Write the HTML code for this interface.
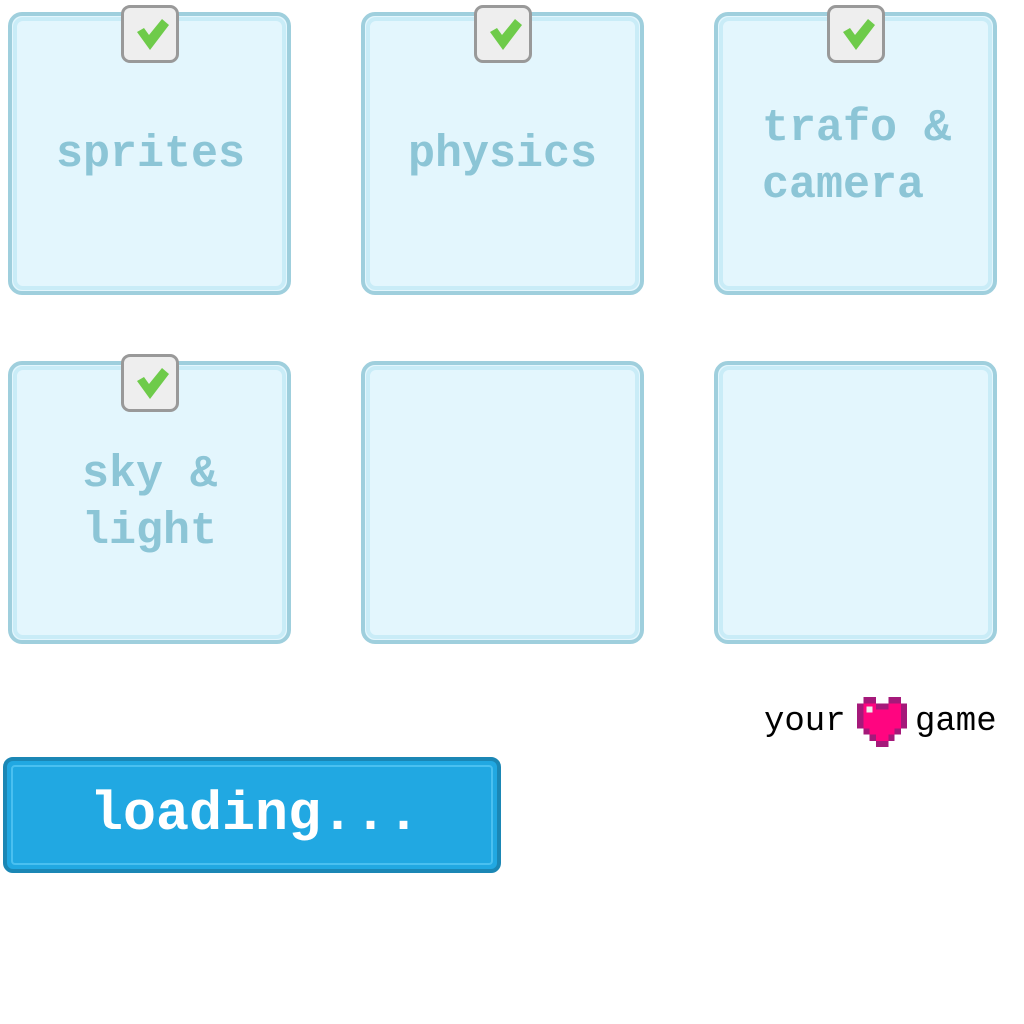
<!DOCTYPE html>
<html><head><style>
body{margin:0;width:1024px;height:1024px;background:#fff;position:relative;overflow:hidden;font-family:"Liberation Mono",monospace}
.card{position:absolute;width:275px;height:275px;border:4px solid #9fcfdd;border-radius:14px;background:#e3f6fd;box-sizing:content-box}
.card:before{content:"";position:absolute;left:1px;top:1px;right:1px;bottom:1px;border:4px solid #c9ecf7;border-radius:10px}
.t{position:absolute;color:#8cc5d6;font-weight:bold;font-size:45px;line-height:57px;white-space:pre}
.cb{position:absolute;width:52px;height:52px;border:3px solid #999;border-radius:9px;background:#eee}
.cb svg{position:absolute;left:9px;top:8px}
</style></head><body>
<div class="card" style="left:8px;top:12px"></div>
<div class="card" style="left:361px;top:12px"></div>
<div class="card" style="left:714px;top:12px"></div>
<div class="card" style="left:8px;top:361px"></div>
<div class="card" style="left:361px;top:361px"></div>
<div class="card" style="left:714px;top:361px"></div>
<div class="t" style="left:56px;top:126px">sprites</div>
<div class="t" style="left:408px;top:126px">physics</div>
<div class="t" style="left:762px;top:100px">trafo &amp;
camera</div>
<div class="t" style="left:82px;top:446px">sky &amp;
light</div>
<div class="cb" style="left:121px;top:5px"><svg width="36" height="36" viewBox="0 0 36 36"><path d="M4 16 L11 12 L16 19 L29 3 L36 9 L17 34 Z" fill="#6ecb4a"/></svg></div>
<div class="cb" style="left:474px;top:5px"><svg width="36" height="36" viewBox="0 0 36 36"><path d="M4 16 L11 12 L16 19 L29 3 L36 9 L17 34 Z" fill="#6ecb4a"/></svg></div>
<div class="cb" style="left:827px;top:5px"><svg width="36" height="36" viewBox="0 0 36 36"><path d="M4 16 L11 12 L16 19 L29 3 L36 9 L17 34 Z" fill="#6ecb4a"/></svg></div>
<div class="cb" style="left:121px;top:354px"><svg width="36" height="36" viewBox="0 0 36 36"><path d="M4 16 L11 12 L16 19 L29 3 L36 9 L17 34 Z" fill="#6ecb4a"/></svg></div>

<div style="position:absolute;left:764px;top:702px;font-size:34px;line-height:40px;color:#000">your</div>
<div style="position:absolute;left:915px;top:702px;font-size:34px;line-height:40px;color:#000">game</div>
<svg style="position:absolute;left:857px;top:697px" width="50" height="50" viewBox="0 0 8 8" shape-rendering="crispEdges">
<g fill="#a5197a">
<rect x="1" y="0" width="2" height="1"/><rect x="5" y="0" width="2" height="1"/>
<rect x="0" y="1" width="1" height="4"/><rect x="7" y="1" width="1" height="4"/>
<rect x="3" y="1" width="2" height="1"/>
<rect x="1" y="5" width="1" height="1"/><rect x="6" y="5" width="1" height="1"/>
<rect x="2" y="6" width="1" height="1"/><rect x="5" y="6" width="1" height="1"/>
<rect x="3" y="7" width="2" height="1"/>
</g>
<g fill="#ff0580">
<rect x="1" y="1" width="2" height="4"/><rect x="5" y="1" width="2" height="4"/>
<rect x="3" y="2" width="2" height="3"/>
<rect x="2" y="5" width="4" height="1"/><rect x="3" y="6" width="2" height="1"/>
</g>
<rect x="1.5" y="1.5" width="1" height="1" fill="#eee"/>
</svg>

<div style="position:absolute;left:3px;top:757px;width:490px;height:108px;border:4px solid #1b87b5;border-radius:10px;background:#21a8e2">
<div style="position:absolute;left:4px;top:4px;right:4px;bottom:4px;border:2px solid #4ac0f0;border-radius:4px"></div>
<div style="position:absolute;left:83px;top:24px;color:#fff;font-weight:bold;font-size:55px;line-height:60px">loading...</div>
</div>
</body></html>
